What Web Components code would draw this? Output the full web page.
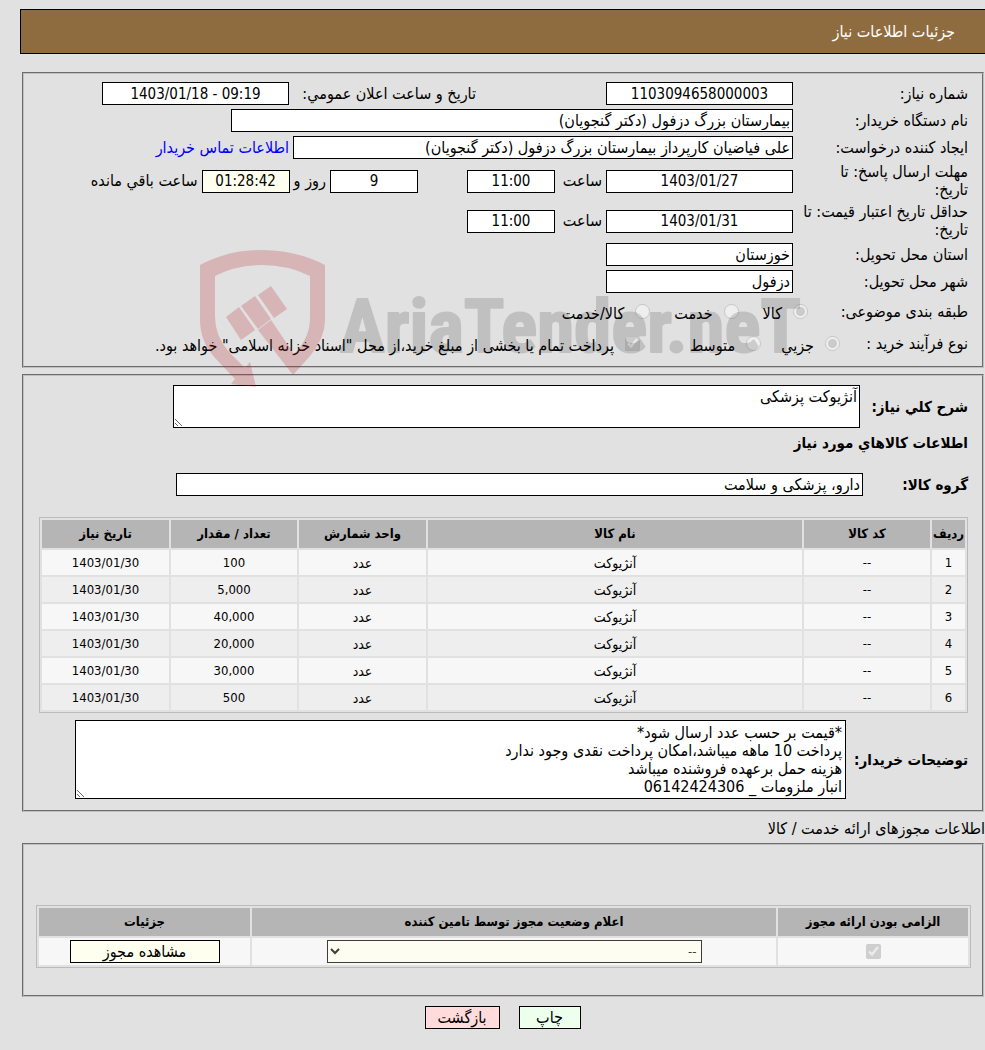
<!DOCTYPE html>
<html lang="fa" dir="rtl">
<head>
<meta charset="utf-8">
<title>جزئیات اطلاعات نیاز</title>
<style>
  body {
    margin: 0;
    background: #e1e1e1;
    color: #000;
    font: 16px/18px "DejaVu Sans Condensed", "DejaVu Sans", sans-serif;
  }
</style>
</head>
<body>
<need-page>
  <page-title>جزئیات اطلاعات نیاز</page-title>

  <form-panel>
    <field-row label="شماره نیاز:" value="1103094658000003" size="date" kind="center">
      <inline-field class="announce" label="تاریخ و ساعت اعلان عمومي:" value="1403/01/18 - 09:19" size="date"></inline-field>
    </field-row>
    <field-row label="نام دستگاه خریدار:" value="بیمارستان بزرگ دزفول (دکتر گنجویان)" size="org"></field-row>
    <field-row label="ایجاد کننده درخواست:" value="علی فیاضیان کارپرداز بیمارستان بزرگ دزفول (دکتر گنجویان)" size="person">
      <a href="#contact">اطلاعات تماس خریدار</a>
    </field-row>
    <field-row label="مهلت ارسال پاسخ: تا&#10;تاریخ:" value="1403/01/27" size="date" kind="center">
      <inline-field label="ساعت" value="11:00" size="time"></inline-field>
      <inline-field class="days" value="9" size="time" after="روز و"></inline-field>
      <inline-field value="01:28:42" size="time" tone="cream" after="ساعت باقي مانده"></inline-field>
    </field-row>
    <field-row label="حداقل تاریخ اعتبار قیمت: تا&#10;تاریخ:" value="1403/01/31" size="date" kind="center">
      <inline-field label="ساعت" value="11:00" size="time"></inline-field>
    </field-row>
    <field-row label="استان محل تحویل:" value="خوزستان" size="date"></field-row>
    <field-row label="شهر محل تحویل:" value="دزفول" size="date"></field-row>
    <choice-row label="طبقه بندی موضوعی:" kind="subject">
      <choice-item type="radio" checked>کالا</choice-item>
      <choice-item type="radio">خدمت</choice-item>
      <choice-item type="radio">کالا/خدمت</choice-item>
    </choice-row>
    <choice-row label="نوع فرآیند خرید :" kind="process">
      <choice-item type="radio" checked>جزیي</choice-item>
      <choice-item type="radio">متوسط</choice-item>
      <choice-item class="payment" type="checkbox" checked>پرداخت تمام یا بخشی از مبلغ خرید،از محل "اسناد خزانه اسلامی" خواهد بود.</choice-item>
    </choice-row>
    <brand-watermark></brand-watermark>
  </form-panel>

  <form-panel>
    <note-row label="شرح کلي نیاز:" kind="summary">آنژیوکت پزشکی</note-row>
    <section-heading>اطلاعات کالاهاي مورد نیاز</section-heading>
    <group-row label="گروه کالا:" value="دارو، پزشکی و سلامت"></group-row>
    <goods-table></goods-table>
    <note-row label="توضیحات خریدار:" kind="remarks">*قیمت بر حسب عدد ارسال شود*
پرداخت 10 ماهه میباشد،امکان پرداخت نقدی وجود ندارد
هزینه حمل برعهده فروشنده میباشد
انبار ملزومات _ 06142424306</note-row>
  </form-panel>

  <section-caption>اطلاعات مجوزهای ارائه خدمت / کالا</section-caption>

  <form-panel>
    <license-table></license-table>
  </form-panel>

  <action-bar></action-bar>
</need-page>

<script>
const base = `
  *, *::before { box-sizing: border-box; }
  input, textarea, select, button {
    font: inherit; color: #000; margin: 0; border-radius: 0; border: 1px solid #000;
  }
  .box { height: 23px; padding: 0 2px; background: #fff; flex: none; }
  .center { text-align: center; direction: ltr; font-size: 15px; }
  .cream { background: #ffffef; }
  .date { width: 187px; }
  .time { width: 88px; }
  .org { width: 562px; }
  .person { width: 500px; }
`;

function define(name, render) {
  customElements.define(name, class extends HTMLElement {
    connectedCallback() {
      if (this.shadowRoot) return;
      const t = document.createElement('template');
      t.innerHTML = render(k => this.getAttribute(k) || '', this);
      this.attachShadow({ mode: 'open' }).append(t.content.cloneNode(true));
    }
  });
}
const style = css => `<style>${base}${css}</style>`;

define('need-page', () => style(`
  :host { display: block; padding: 9px 0 21px 20px; }
  ::slotted(form-panel) { margin: 0 1px 6px 2px; }
`) + `<slot></slot>`);

define('page-title', () => style(`
  :host { display: block; margin-bottom: 18px; }
  h1 {
    margin: 0; padding: 12px 30px; font: inherit; line-height: 19px; color: #fff;
    background: #8f6c3f; border: 1px solid #000; border-right: 0;
  }
`) + `<h1><slot></slot></h1>`);

define('form-panel', () => style(`
  :host { display: block; position: relative; }
  fieldset {
    margin: 0; min-width: 0; padding: 8px 14px 9px 15px; border: 2px groove #c0c0c0;
    display: flex; flex-direction: column; gap: 4px;
  }
`) + `<fieldset><slot></slot></fieldset>`);

define('field-row', a => style(`
  :host { display: flex; align-items: center; gap: 4px; min-height: 23px; }
  label { width: 171px; flex: none; white-space: pre-line; }
  ::slotted(a) { color: #00f; text-decoration: none; }
  ::slotted(.announce) { margin-right: 126px; --lead: 183px; }
  ::slotted(.days) { margin-right: 45px; }
`) + `<label for="v">${a('label')}</label>
  <input id="v" class="box ${a('size')} ${a('kind')}" readonly value="${a('value')}">
  <slot></slot>`);

define('inline-field', a => style(`
  :host { display: flex; align-items: center; gap: 4px; white-space: nowrap; }
  .lead { min-width: var(--lead, 43px); }
`) + (a('label') ? `<label class="lead" for="v">${a('label')}</label>` : '') +
  `<input id="v" class="box center ${a('size')} ${a('tone')}" readonly value="${a('value')}">` +
  (a('after') ? `<label for="v">${a('after')}</label>` : ''));

define('choice-row', a => style(`
  :host { display: flex; align-items: center; min-height: 28px; }
  .name { width: ${a('kind') === 'subject' ? 160 : 128}px; flex: none; padding-top: 2px; }
  .set { display: flex; align-items: center; gap: ${a('kind') === 'subject' ? 24 : 20}px; }
  ::slotted(.payment) { margin-right: 30px; }
`) + `<span class="name" id="n">${a('label')}</span>
  <div class="set" role="group" aria-labelledby="n"><slot></slot></div>`);

define('choice-item', (a, el) => style(`
  :host { display: block; white-space: nowrap; }
  label { display: flex; align-items: center; gap: 11px; }
  input { width: 15px; height: 15px; flex: none; }
  span { padding-top: 6px; }
`) + `<label><input type="${a('type')}" disabled ${el.hasAttribute('checked') ? 'checked' : ''}><span><slot></slot></span></label>`);

define('brand-watermark', () => style(`
  :host { display: block; position: absolute; z-index: 1; top: 178px; right: 180px; width: 604px; height: 140px; pointer-events: none; direction: ltr; }
  svg { display: block; overflow: visible; }
  text { font-family: "Roboto Condensed", "Open Sans Condensed", "Liberation Sans Narrow", "Liberation Sans", sans-serif; font-weight: bold; }
`) + `<svg width="604" height="140" viewBox="0 0 604 140" aria-hidden="true">
  <g fill="#b4232d" fill-opacity=".23">
    <path fill-rule="evenodd" d="M0 15Q28 0 62 0T125 15V70Q125 88 110 106L93 125L58 80L71 70L94 104Q110 88 110 68V26Q88 15 62 15T15 26V67Q15 86 29 102L45 118L50 112L56 137L31 134L35 129L16 109Q0 92 0 70Z"/>
    <path d="M71 36L87 59L74 68L58 45ZM55 46L71 69L58 79L41 56ZM39 57L55 80L41 90L26 67Z"/>
  </g>
  <g opacity=".14"><text x="140" y="102" font-size="75" fill="#000" stroke="#000" stroke-width="2" stroke-linejoin="round">AriaTender.neT</text></g>
</svg>`);

define('note-row', (a, el) => style(`
  :host { display: flex; align-items: center; gap: 4px; ${a('kind') === 'summary' ? 'margin: 1px 0 2px' : 'margin: 3px 0 2px'}; }
  label { font-size: 15px; font-weight: bold; white-space: nowrap; width: ${a('kind') === 'summary' ? 104 : 118}px; flex: none; }
  textarea { display: block; flex: none; padding: 2px; line-height: 18px; background: #fff; overflow: hidden; resize: both; }
  .summary { width: 687px; height: 43px; }
  .remarks { width: 771px; height: 79px; padding: 3px; }
`) + `<label for="v">${a('label')}</label><textarea id="v" class="${a('kind')}" readonly>${el.textContent}</textarea>`);

define('section-heading', () => style(`
  :host { display: block; }
  h2 { margin: 0; font: inherit; font-size: 15px; font-weight: bold; }
`) + `<h2><slot></slot></h2>`);

define('group-row', a => style(`
  :host { display: flex; align-items: center; margin: 17px 0; }
  label { width: 105px; flex: none; font-size: 15px; font-weight: bold; }
  input { width: 687px; }
`) + `<label for="v">${a('label')}</label><input id="v" class="box" readonly value="${a('value')}">`);

const tableCss = `
  table { width: 100%; table-layout: fixed; border: 1px solid #bbb; border-collapse: separate; border-spacing: 2px; font-size: 13px; text-align: center; }
  th { height: 28px; padding: 0; background: #b5b5b5; white-space: nowrap; }
  td { height: 25px; padding: 0; background: #f7f7f7; }
  tr:nth-child(even) td { background: #eee; }
  .word { font-size: 14px; }
`;

define('goods-table', () => {
  const amounts = ['100', '5,000', '40,000', '20,000', '30,000', '500'];
  const rows = amounts.map((n, i) => `<tr><td>${i + 1}</td><td>--</td><td class="word">آنژیوکت</td><td class="word">عدد</td><td>${n}</td><td>1403/01/30</td></tr>`).join('');
  return style(`:host { display: block; }` + tableCss) + `<table>
    <colgroup><col style="width:33px"><col style="width:126px"><col><col style="width:127px"><col style="width:126px"><col style="width:127px"></colgroup>
    <thead><tr><th>ردیف</th><th>کد کالا</th><th>نام کالا</th><th>واحد شمارش</th><th>تعداد / مقدار</th><th>تاریخ نیاز</th></tr></thead>
    <tbody>${rows}</tbody></table>`;
});

define('section-caption', () => style(`
  :host { display: block; margin: 8px 0 5px; }
  h2 { margin: 0; font: inherit; }
`) + `<h2><slot></slot></h2>`);

define('license-table', () => style(`
  :host { display: block; margin: 52px -3px 18px; }
  ${tableCss}
  td { height: 27px; }
  input { width: 15px; height: 15px; display: block; margin: 0 auto; }
  select { display: block; width: 375px; height: 23px; margin: 0 auto; padding: 0; background: #ffffef; opacity: .75; }
  button { display: block; width: 150px; height: 23px; margin: 0 auto; padding: 0; font-size: 16px; background: #ffffef; }
`) + `<table>
  <colgroup><col style="width:190px"><col><col style="width:211px"></colgroup>
  <thead><tr><th>الزامی بودن ارائه مجوز</th><th>اعلام وضعیت مجوز توسط تامین کننده</th><th>جزئیات</th></tr></thead>
  <tbody><tr>
    <td><input type="checkbox" checked disabled aria-label="الزامی بودن ارائه مجوز"></td>
    <td><select disabled aria-label="اعلام وضعیت مجوز"><option>--</option></select></td>
    <td><button type="button">مشاهده مجوز</button></td>
  </tr></tbody></table>`);

define('action-bar', () => style(`
  :host { display: flex; justify-content: center; gap: 19px; margin-top: 9px; }
  button { height: 23px; padding: 0; }
  .print { width: 62px; background: #edffed; }
  .back { width: 75px; background: #ffdbdb; }
`) + `<button type="button" class="print">چاپ</button><button type="button" class="back">بازگشت</button>`);
</script>
</body>
</html>
